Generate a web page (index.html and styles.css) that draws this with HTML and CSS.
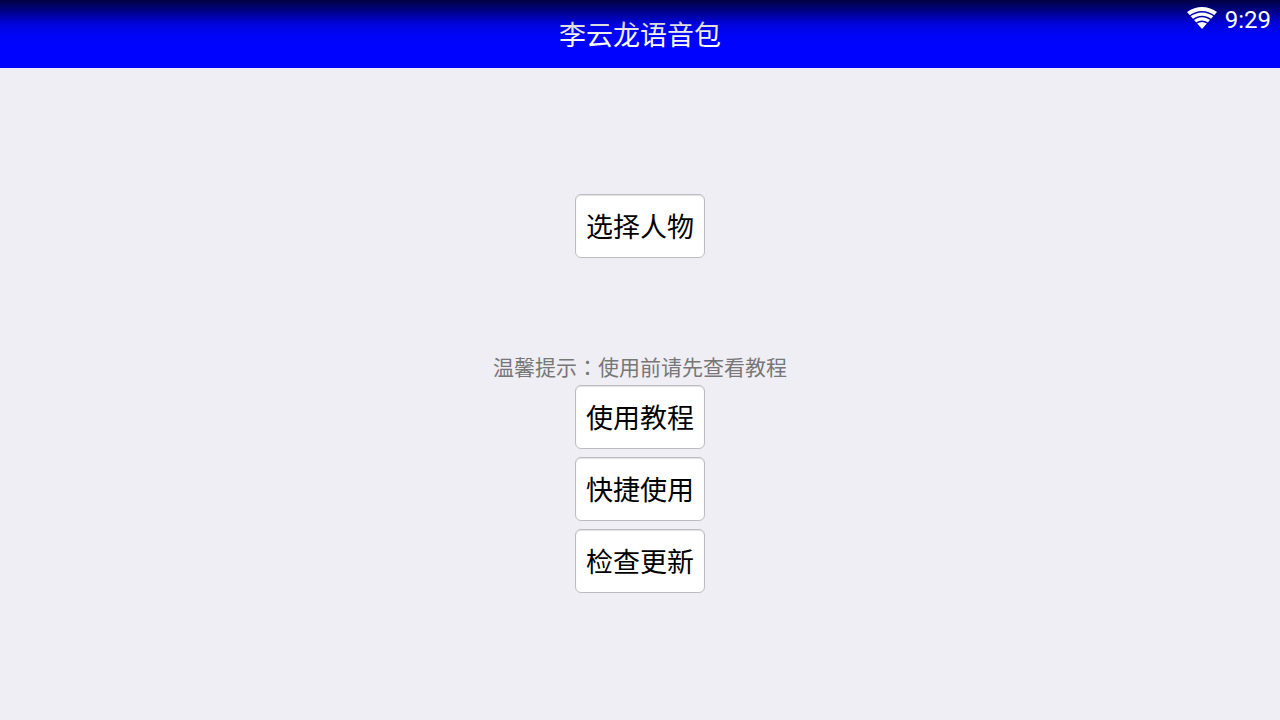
FILE: index.html
```html
<!DOCTYPE html>
<html lang="zh-CN">
<head>
    <meta charset="UTF-8">
    <meta name="viewport" content="width=device-width, initial-scale=1.0">
    <title>李云龙语音包</title>

    <link rel="stylesheet" href="styles.css">
</head>
<body>

    <header class="titleBar">
        <h1>李云龙语音包</h1>
        <div class="statusBar">
            <svg class="wifi" viewBox="0 0 30 22" aria-hidden="true">
                <path class="fan" d="M15 22 L0 5 Q15 -5 30 5 Z"/>
                <path class="gap" d="M2 9.5 Q15 0 28 9.5"/>
                <path class="gap" d="M5 13.5 Q15 5.5 25 13.5"/>
                <path class="gap" d="M8 17 Q15 11.5 22 17"/>
            </svg>
            <span class="clock">9:29</span>
        </div>
    </header>

    <main>
        <button type="button" class="choose">选择人物</button>
        <p class="tip">温馨提示<span class="colon" lang="zh-TW">：</span>使用前请先查看教程</p>
        <div class="menu">
            <button type="button">使用教程</button>
            <button type="button">快捷使用</button>
            <button type="button">检查更新</button>
        </div>
    </main>

</body>
</html>
```
FILE: styles.css
```css
body {
    margin: 0;
    min-height: 100vh;
    background-color: rgb(239, 238, 244);
    font-family: "Noto Sans CJK SC", sans-serif;
}

.titleBar {
    position: relative;
    display: flex;
    justify-content: center;
    align-items: center;
    height: 68px;
    background-color: rgb(0, 4, 255);
    color: white;
}

/* shade that falls from the top edge over the bar and its title */
.titleBar::after {
    content: "";
    position: absolute;
    top: 0;
    left: 0;
    right: 0;
    height: 48px;
    background: linear-gradient(rgba(0, 0, 0, 0.75), rgba(0, 0, 0, 0.45) 25%, rgba(0, 0, 0, 0.14) 50%, rgba(0, 0, 0, 0.03) 75%, rgba(0, 0, 0, 0));
}

.titleBar h1 {
    margin: 0;
    font-size: 27px;
    font-weight: 400;
    line-height: 40px;
}

.statusBar {
    position: absolute;
    top: 4px;
    right: 9px;
    z-index: 1;
    display: flex;
    align-items: flex-start;
    gap: 8px;
}

.wifi {
    width: 30px;
    height: 22px;
    padding-top: 3px;
}

.fan {
    fill: white;
}

.gap {
    fill: none;
    stroke: rgb(0, 3, 180);
    stroke-width: 1.3;
}

.clock {
    font-family: Roboto, sans-serif;
    font-size: 24px;
    line-height: 32px;
}

main {
    display: flex;
    flex-direction: column;
    align-items: center;
    padding: 126px 0;
}

button {
    box-sizing: border-box;
    height: 64px;
    padding: 0 10px;
    border: 1px solid rgb(188, 188, 192);
    border-radius: 6px;
    background-color: white;
    box-shadow: inset 0 1px 1px rgb(225, 225, 225);
    color: black;
    font-family: inherit;
    font-size: 27px;
    line-height: 40px;
    cursor: pointer;
}

button:active {
    background-color: rgb(225, 225, 230);
}

.tip {
    margin: 92px 0 2px;
    color: rgb(119, 119, 119);
    font-size: 21px;
    line-height: 33px;
}

.colon {
    font-family: "Noto Sans CJK TC", sans-serif;
}

.menu {
    display: flex;
    flex-direction: column;
    gap: 8px;
}
```
